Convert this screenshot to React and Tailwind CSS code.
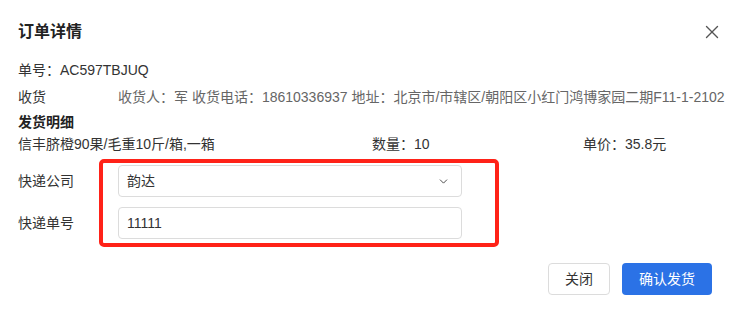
import { ChevronDown, X } from "lucide-react";

const font = { fontFamily: '"Liberation Sans", "Noto Sans CJK SC", sans-serif' };

const App = () => {
    return (
        <div style={font} className="relative w-[747px] h-[317px] bg-white text-[#333] text-[14px] px-[18px] pt-[22px] overflow-hidden">
            {/* Header */}
            <div className="flex items-center justify-between h-[20px]">
                <h1 className="text-[16px] font-semibold text-[#222]">订单详情</h1>
                <X className="w-[22px] h-[22px] text-[#555] mr-[6px]" strokeWidth={1.5} />
            </div>

            <div className="mt-[18px] h-[20px] leading-[20px]">单号：AC597TBJUQ</div>

            <div className="mt-[7px] flex h-[20px] leading-[20px]">
                <span className="w-[100px] shrink-0">收货</span>
                <span className="text-[#666] whitespace-nowrap">
                    收货人：军 收货电话：18610336937 地址：北京市/市辖区/朝阳区小红门鸿博家园二期F11-1-2102
                </span>
            </div>

            <div className="mt-[5px] h-[20px] leading-[20px] font-bold text-[#222]">发货明细</div>
            <div className="mt-[2px] flex h-[20px] leading-[20px]">
                <span className="w-[354px]">信丰脐橙90果/毛重10斤/箱,一箱</span>
                <span className="w-[211px]">数量：10</span>
                <span>单价：35.8元</span>
            </div>

            {/* Form */}
            <div className="mt-[11px] flex flex-col gap-[10px]">
                <div className="flex items-center">
                    <label className="w-[100px] shrink-0">快递公司</label>
                    <div className="w-[344px] h-[32px] border border-[#dcdcdc] rounded-[4px] flex items-center justify-between pl-[8px] pr-[11px]">
                        <span>韵达</span>
                        <ChevronDown className="w-[13px] h-[13px] text-[#333]" strokeWidth={1.6} />
                    </div>
                </div>
                <div className="flex items-center">
                    <label className="w-[100px] shrink-0">快递单号</label>
                    <div className="w-[344px] h-[32px] border border-[#dcdcdc] rounded-[4px] flex items-center pl-[8px]">
                        11111
                    </div>
                </div>
            </div>

            {/* annotation box */}
            <div className="absolute left-[99px] top-[159px] w-[400px] h-[88px] border-4 border-[#ff2218] rounded-[5px] pointer-events-none" />

            {/* Footer */}
            <div className="mt-[24px] flex justify-end gap-[12px] pr-[17px]">
                <button className="w-[62px] h-[32px] border border-[#dcdcdc] rounded-[4px] bg-white text-[#333]">关闭</button>
                <button className="w-[90px] h-[32px] rounded-[4px] bg-[#2b72e6] text-white">确认发货</button>
            </div>
        </div>
    );
};

export default App;
